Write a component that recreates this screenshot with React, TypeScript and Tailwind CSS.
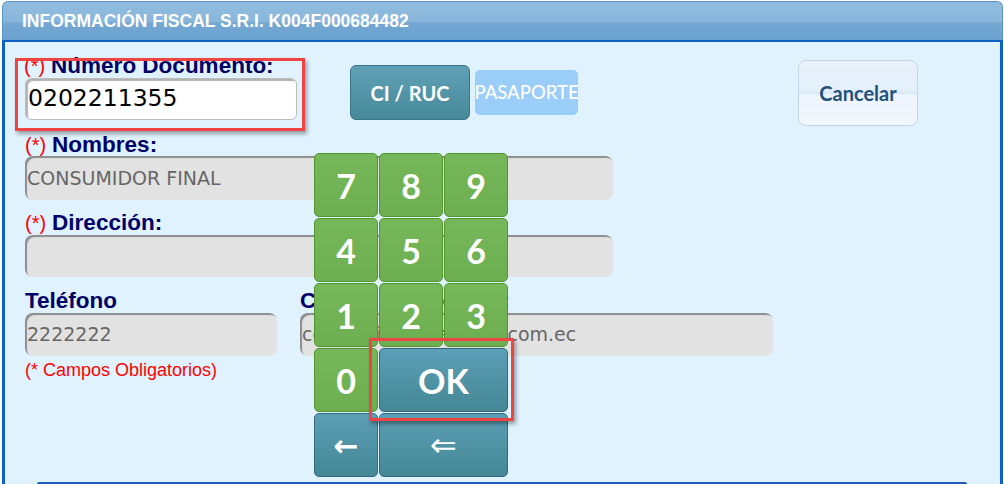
import React from 'react';

const labelCls = "text-[22.5px] leading-[22px] font-bold text-[#000066] [font-family:'Liberation_Sans',Arial,sans-serif] whitespace-nowrap";
const reqCls = "text-[20px] font-normal text-[#ff0000] mr-[6px]";
const roField =
  "flex items-center bg-[#e2e2e2] rounded-[8px] shadow-[inset_2px_2px_1px_rgba(0,0,0,0.38)] pl-[2px] text-[19px] text-[#666666] [font-family:'DejaVu_Sans',sans-serif] whitespace-nowrap overflow-hidden";

const Label: React.FC<{ text: string; required?: boolean }> = ({ text, required }) => (
  <div className={labelCls}>
    {required && <span className={reqCls}>(*)</span>}
    {text}
  </div>
);

const GreenKey: React.FC<{ k: string }> = ({ k }) => (
  <div className="flex items-center justify-center rounded-[5px] border border-[#51962f] bg-[linear-gradient(#76b759,#6dae50)] text-white text-[34px] font-bold [font-family:Lato,sans-serif]">
    {k}
  </div>
);

const TealKey: React.FC<{ children: React.ReactNode; className?: string }> = ({ children, className }) => (
  <div
    className={
      'flex items-center justify-center rounded-[5px] border border-[#2f6a82] bg-[linear-gradient(#5c9fb6,#448795)] text-white ' +
      (className || '')
    }
  >
    {children}
  </div>
);

export default function App() {
  return (
    <div className="relative w-[1004px] h-[484px] overflow-hidden bg-white">
      {/* header */}
      <div className="ml-[2px] mt-[1px] w-[1001px] h-[39px] rounded-t-[6px] border border-b-0 border-[#5b95c7] bg-[linear-gradient(#90bcde_0%,#89b7db_50%,#74a8d2_56%,#6aa1cf_100%)] flex items-center pl-[19px]">
        <span className="text-white font-bold text-[17.5px] [font-family:'Liberation_Sans',Arial,sans-serif]">
          INFORMACIÓN FISCAL S.R.I. K004F000684482
        </span>
      </div>

      {/* body */}
      <div className="ml-[2px] w-[1001px] h-[444px] border-x-[3px] border-t-[2px] border-[#0c62c4] bg-[#dff2fe] flex flex-col pl-[20px] pt-[13px]">
        {/* row 1 */}
        <div className="flex items-start h-[65px]">
          <div className="w-[272px]">
            <div className="-ml-[1px]">
              <Label text="Número Documento:" required />
            </div>
            <div className="mt-[1px] h-[42px] bg-white rounded-[6px] border border-[#bdbdbd] shadow-[inset_2px_2px_1px_rgba(0,0,0,0.3)] flex items-center pl-[2px] text-[23.5px] text-black [font-family:'DejaVu_Sans',sans-serif]">
              0202211355
            </div>
          </div>
          <button className="ml-[53px] mt-[10px] w-[120px] h-[55px] rounded-[6px] border border-[#3a7489] bg-[linear-gradient(#60a0b7,#468a99)] text-white text-[20px] font-bold [font-family:Lato,sans-serif]">
            CI / RUC
          </button>
          <button className="ml-[5px] mt-[15px] w-[103px] h-[45px] rounded-[5px] bg-[#9acdf7] text-white text-[18.5px] font-medium [font-family:Lato,sans-serif] overflow-hidden whitespace-nowrap flex items-center justify-center">
            PASAPORTE
          </button>
          <button className="ml-[220px] mt-[5px] w-[120px] h-[66px] rounded-[8px] border border-[#c4d6e6] bg-[linear-gradient(#e8f2fb_0%,#e3effa_47%,#d5e7f4_50%,#edf5fc_53%,#f1f7fd_100%)] text-[#24517a] text-[20px] font-bold [font-family:Lato,sans-serif]">
            Cancelar
          </button>
        </div>

        {/* nombres */}
        <div className="mt-[14px]">
          <Label text="Nombres:" required />
          <div className={roField + ' w-[588px] h-[44px]'}>CONSUMIDOR FINAL</div>
        </div>

        {/* direccion */}
        <div className="mt-[12px]">
          <Label text="Dirección:" required />
          <div className={roField + ' mt-[1px] w-[588px] h-[42px]'}></div>
        </div>

        {/* telefono / correo */}
        <div className="mt-[13px] flex gap-[23px]">
          <div className="w-[252px]">
            <Label text="Teléfono" />
            <div className={roField + ' mt-[1px] h-[43px]'}>2222222</div>
          </div>
          <div className="w-[473px]">
            <Label text="Correo Electrónico:" />
            <div className={roField + ' mt-[1px] h-[43px]'}>consumidorfinal@kfc.com.ec</div>
          </div>
        </div>

        <div className="mt-[5px] text-[18px] leading-[18px] text-[#ff0000] [font-family:'Liberation_Sans',Arial,sans-serif]">
          (* Campos Obligatorios)
        </div>

        <div className="mt-auto ml-[12px] w-[930px] h-[2px] rounded-t-[2px] bg-[#1d5bb5]" />
      </div>

      {/* keypad */}
      <div className="absolute left-[314px] top-[153px] grid grid-cols-[64px_64px_64px] grid-rows-[64px_64px_64px_64px_64px] gap-[1px]">
        {['7', '8', '9', '4', '5', '6', '1', '2', '3', '0'].map((k) => (
          <GreenKey key={k} k={k} />
        ))}
        <TealKey className="col-span-2 text-[34px] font-bold [font-family:Lato,sans-serif]">OK</TealKey>
        <TealKey className="text-[30px] font-bold [font-family:'DejaVu_Sans',sans-serif]">←</TealKey>
        <TealKey className="col-span-2 text-[32px] [font-family:'DejaVu_Sans',sans-serif]">⇐</TealKey>
      </div>

      {/* highlight boxes */}
      <div className="absolute left-[15px] top-[58px] w-[290px] h-[73px] border-[3px] border-[#ef4444] shadow-[2px_3px_4px_rgba(0,0,0,0.35)]" />
      <div className="absolute left-[369px] top-[338px] w-[145px] h-[83px] border-[3px] border-[#ef4444] shadow-[2px_3px_4px_rgba(0,0,0,0.35)]" />
    </div>
  );
}
